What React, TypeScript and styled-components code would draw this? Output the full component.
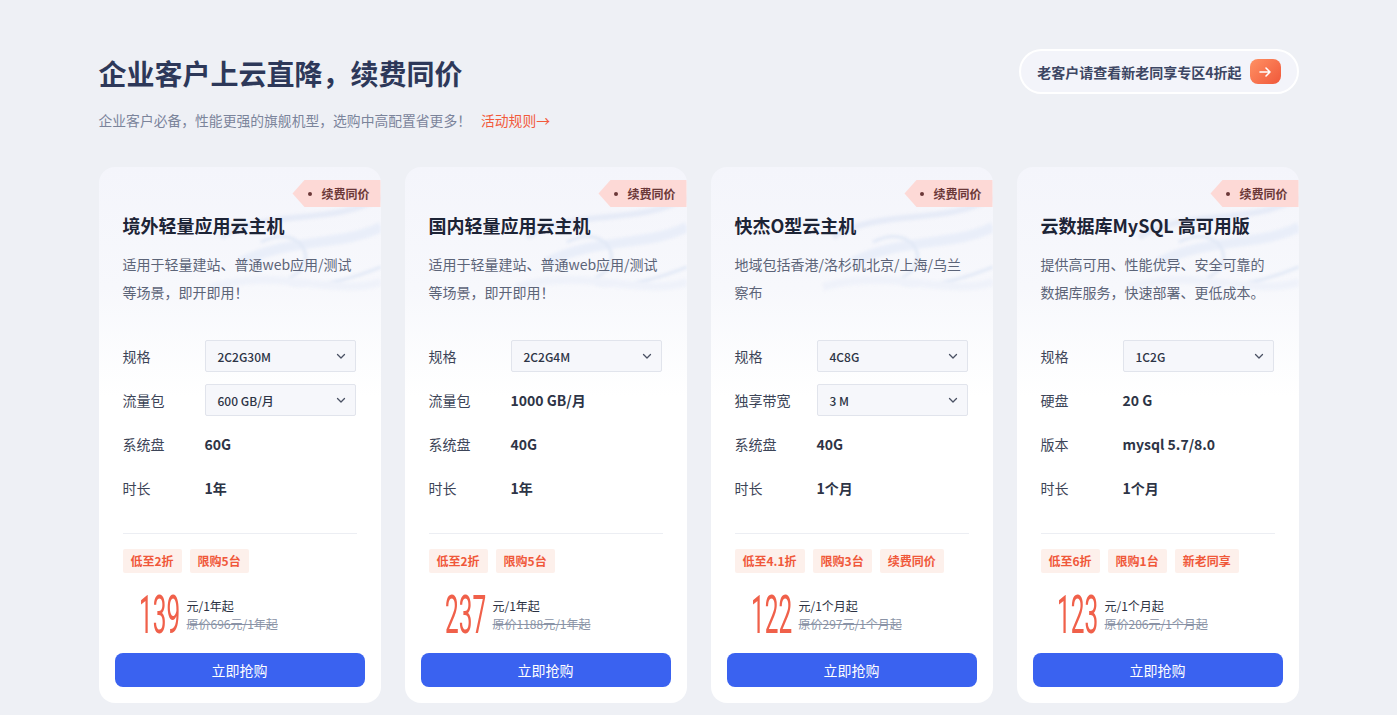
import React from 'react'
import styled, { createGlobalStyle } from 'styled-components'

const GlobalStyle = createGlobalStyle`
  html, body {
    margin: 0;
    padding: 0;
    background: #eef0f5;
    font-family: 'Noto Sans CJK SC', 'Noto Sans', sans-serif;
  }
  * {
    box-sizing: border-box;
  }
`

const Page = styled.div`
  width: 1200px;
  margin: 0 auto;
  padding-top: 49px;
`

const Header = styled.div`
  display: flex;
  justify-content: space-between;
  align-items: flex-start;
`

const Title = styled.h1`
  margin: 4px 0 0;
  font-size: 28px;
  line-height: 40px;
  font-weight: 700;
  color: #2d3859;
`

const Sub = styled.p`
  margin: 16px 0 0;
  font-size: 13.8px;
  line-height: 22px;
  color: #7b849b;
`

const RuleLink = styled.a`
  margin-left: 10px;
  color: #f25a3c;
  text-decoration: none;
`

const OldBtn = styled.div`
  display: flex;
  align-items: center;
  gap: 8px;
  height: 45px;
  padding: 0 16px 0 16px;
  border: 2px solid #ffffff;
  border-radius: 23px;
  background: #f3f4fa;
  font-size: 14px;
  font-weight: 700;
  color: #3d4663;
`

const ArrowBox = styled.span`
  display: flex;
  align-items: center;
  justify-content: center;
  width: 31px;
  height: 25px;
  border-radius: 8px;
  background: linear-gradient(135deg, #ff9164 0%, #f0583a 100%);
`

const Grid = styled.div`
  display: grid;
  grid-template-columns: repeat(4, 282px);
  gap: 24px;
  margin-top: 36px;
`

const Card = styled.div`
  position: relative;
  overflow: hidden;
  height: 536px;
  padding: 0 16px 16px;
  border-radius: 16px;
  background: linear-gradient(180deg, #f4f5fb 0px, #f7f8fc 120px, #ffffff 230px);
  display: flex;
  flex-direction: column;
`

const Waves = styled.svg`
  position: absolute;
  top: 0;
  right: 0;
  width: 180px;
  height: 160px;
  pointer-events: none;
  filter: blur(1.5px);
`

const Ribbon = styled.div`
  position: absolute;
  top: 13px;
  right: 0;
  display: flex;
  align-items: center;
  gap: 9px;
  height: 27px;
  padding: 0 11px 0 16px;
  background: #fdd9d6;
  clip-path: polygon(12px 0, 100% 0, 100% 100%, 12px 100%, 0 50%);
  font-size: 12px;
  font-weight: 700;
  color: #6b3838;
  &::before {
    content: '';
    width: 4px;
    height: 4px;
    border-radius: 50%;
    background: #6b3838;
  }
`

const Body = styled.div`
  position: relative;
  padding: 45px 8px 0;
`

const CardTitle = styled.h3`
  margin: 0;
  font-size: 18px;
  line-height: 26px;
  font-weight: 700;
  color: #1d2436;
`

const Desc = styled.p`
  margin: 12px 0 0;
  font-size: 14px;
  line-height: 28px;
  color: #5c6478;
  height: 56px;
`

const Rows = styled.div`
  margin-top: 28px;
`

const Row = styled.div`
  display: flex;
  align-items: center;
  height: 44px;
`

const Label = styled.span`
  width: 82px;
  font-size: 14px;
  color: #3c4457;
`

const Value = styled.span`
  font-size: 14px;
  font-weight: 700;
  color: #2d3446;
`

const Select = styled.div`
  display: flex;
  align-items: center;
  justify-content: space-between;
  width: 151px;
  height: 32px;
  padding: 0 8px 0 12px;
  border: 1px solid #e1e4ec;
  border-radius: 2px;
  background: #f6f7fb;
  font-size: 12px;
  font-weight: 500;
  color: #2d3446;
`

const Divider = styled.div`
  height: 1px;
  margin-top: 23px;
  background: #eceef3;
`

const Tags = styled.div`
  display: flex;
  gap: 8px;
  margin-top: 15px;
`

const Tag = styled.span`
  height: 24px;
  line-height: 24px;
  padding: 0 8px;
  border-radius: 2px;
  background: #fdf0eb;
  font-size: 12px;
  font-weight: 700;
  color: #f0583a;
`

const PriceRow = styled.div`
  display: flex;
  align-items: center;
  gap: 8px;
  margin-top: 20px;
  padding-left: 16px;
  height: 44px;
`

const Num = styled.span<{ w: number }>`
  display: inline-block;
  width: ${({ w }) => w}px;
  font-family: Roboto, sans-serif;
  font-weight: 400;
  font-size: 53px;
  line-height: 44px;
  color: #f0604a;
  white-space: nowrap;
  transform: scaleX(0.46);
  transform-origin: left center;
`

const PriceText = styled.div`
  display: flex;
  flex-direction: column;
  font-size: 12px;
  line-height: 18px;
  color: #2a3142;
`

const Orig = styled.span`
  color: #8a93a6;
  text-decoration: line-through;
`

const BuyBtn = styled.button`
  margin-top: auto;
  height: 34px;
  width: 100%;
  border: none;
  border-radius: 8px;
  background: #3a62f0;
  color: #ffffff;
  font-family: inherit;
  font-size: 14px;
  cursor: pointer;
`

type Spec = { label: string; value: string; select?: boolean }

type Product = {
  title: string
  desc: string[]
  specs: Spec[]
  tags: string[]
  price: string
  unit: string
  orig: string
}

const products: Product[] = [
  {
    title: '境外轻量应用云主机',
    desc: ['适用于轻量建站、普通web应用/测试', '等场景，即开即用！'],
    specs: [
      { label: '规格', value: '2C2G30M', select: true },
      { label: '流量包', value: '600 GB/月', select: true },
      { label: '系统盘', value: '60G' },
      { label: '时长', value: '1年' },
    ],
    tags: ['低至2折', '限购5台'],
    price: '139',
    unit: '元/1年起',
    orig: '原价696元/1年起',
  },
  {
    title: '国内轻量应用云主机',
    desc: ['适用于轻量建站、普通web应用/测试', '等场景，即开即用！'],
    specs: [
      { label: '规格', value: '2C2G4M', select: true },
      { label: '流量包', value: '1000 GB/月' },
      { label: '系统盘', value: '40G' },
      { label: '时长', value: '1年' },
    ],
    tags: ['低至2折', '限购5台'],
    price: '237',
    unit: '元/1年起',
    orig: '原价1188元/1年起',
  },
  {
    title: '快杰O型云主机',
    desc: ['地域包括香港/洛杉矶北京/上海/乌兰', '察布'],
    specs: [
      { label: '规格', value: '4C8G', select: true },
      { label: '独享带宽', value: '3 M', select: true },
      { label: '系统盘', value: '40G' },
      { label: '时长', value: '1个月' },
    ],
    tags: ['低至4.1折', '限购3台', '续费同价'],
    price: '122',
    unit: '元/1个月起',
    orig: '原价297元/1个月起',
  },
  {
    title: '云数据库MySQL 高可用版',
    desc: ['提供高可用、性能优异、安全可靠的', '数据库服务，快速部署、更低成本。'],
    specs: [
      { label: '规格', value: '1C2G', select: true },
      { label: '硬盘', value: '20 G' },
      { label: '版本', value: 'mysql 5.7/8.0' },
      { label: '时长', value: '1个月' },
    ],
    tags: ['低至6折', '限购1台', '新老同享'],
    price: '123',
    unit: '元/1个月起',
    orig: '原价206元/1个月起',
  },
]

const Chevron = () => (
  <svg width="12" height="12" viewBox="0 0 12 12" fill="none">
    <path d="M2.5 4.5L6 8l3.5-3.5" stroke="#4a5163" strokeWidth="1.3" strokeLinecap="round" strokeLinejoin="round" />
  </svg>
)

const WaveArt = () => (
  <Waves viewBox="0 0 180 160" fill="none">
    <path d="M20 70 C70 40 130 60 180 30" stroke="#e6ebf7" strokeWidth="6" />
    <path d="M40 95 C90 70 140 80 180 60" stroke="#e9eef9" strokeWidth="10" />
    <path d="M60 75 C100 55 120 95 90 110 C70 120 120 125 180 100" stroke="#e2e9f6" strokeWidth="3" />
    <path d="M10 120 C80 100 130 130 180 115" stroke="#eff2fa" strokeWidth="8" />
  </Waves>
)

const ProductCard: React.FC<{ p: Product }> = ({ p }) => (
  <Card>
    <WaveArt />
    <Ribbon>续费同价</Ribbon>
    <Body>
      <CardTitle>{p.title}</CardTitle>
      <Desc>
        {p.desc[0]}
        <br />
        {p.desc[1]}
      </Desc>
      <Rows>
        {p.specs.map((s) => (
          <Row key={s.label}>
            <Label>{s.label}</Label>
            {s.select ? (
              <Select>
                {s.value}
                <Chevron />
              </Select>
            ) : (
              <Value>{s.value}</Value>
            )}
          </Row>
        ))}
      </Rows>
      <Divider />
      <Tags>
        {p.tags.map((t) => (
          <Tag key={t}>{t}</Tag>
        ))}
      </Tags>
      <PriceRow>
        <Num w={40}>{p.price}</Num>
        <PriceText>
          <span>{p.unit}</span>
          <Orig>{p.orig}</Orig>
        </PriceText>
      </PriceRow>
    </Body>
    <BuyBtn>立即抢购</BuyBtn>
  </Card>
)

export default function App() {
  return (
    <>
      <GlobalStyle />
      <Page>
        <Header>
          <div>
            <Title>企业客户上云直降，续费同价</Title>
            <Sub>
              企业客户必备，性能更强的旗舰机型，选购中高配置省更多！
              <RuleLink>活动规则→</RuleLink>
            </Sub>
          </div>
          <OldBtn>
            老客户请查看新老同享专区4折起
            <ArrowBox>
              <svg width="14" height="14" viewBox="0 0 14 14" fill="none">
                <path d="M2 7h10M8 3l4 4-4 4" stroke="#fff" strokeWidth="1.6" strokeLinecap="round" strokeLinejoin="round" />
              </svg>
            </ArrowBox>
          </OldBtn>
        </Header>
        <Grid>
          {products.map((p) => (
            <ProductCard key={p.title} p={p} />
          ))}
        </Grid>
      </Page>
    </>
  )
}
